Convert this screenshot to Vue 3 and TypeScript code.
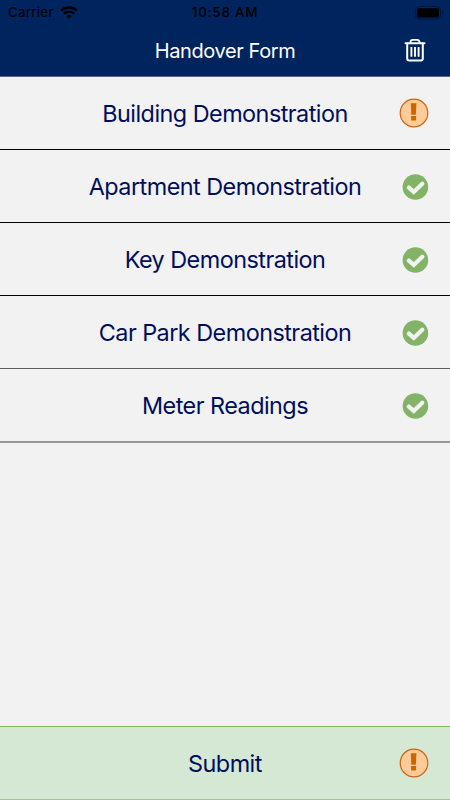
<script setup lang="ts">
type Status = 'done' | 'warning'

interface Section {
  id: string
  title: string
  status: Status
}

const sections: Section[] = [
  { id: 'building', title: 'Building Demonstration', status: 'warning' },
  { id: 'apartment', title: 'Apartment Demonstration', status: 'done' },
  { id: 'key', title: 'Key Demonstration', status: 'done' },
  { id: 'carpark', title: 'Car Park Demonstration', status: 'done' },
  { id: 'meter', title: 'Meter Readings', status: 'done' },
]
</script>

<template>
  <div class="screen">
    <header class="header">
      <div class="status-bar">
        <div class="carrier">
          <span>Carrier</span>
          <svg class="wifi" viewBox="0 0 18 13" width="18" height="13">
            <g fill="none" stroke="#000" stroke-width="2.4">
              <path d="M1 4.6C5.6 0.5 12.4 0.5 17 4.6" />
              <path d="M3.9 7.7C6.9 5.1 11.1 5.1 14.1 7.7" />
            </g>
            <path d="M6.2 10C7.9 8.7 10.1 8.7 11.8 10L9 12.8Z" />
          </svg>
        </div>
        <span class="clock">10:58 AM</span>
        <svg class="battery" viewBox="0 0 29 14" width="29" height="14">
          <rect x="0.5" y="0.5" width="25" height="12.6" rx="3.6" fill="none" stroke="#00153d" />
          <rect x="2" y="2.2" width="22" height="9.2" rx="2" />
          <path d="M27 4.6C28.6 5.2 28.6 8.4 27 9Z" fill="#00153d" />
        </svg>
      </div>
      <div class="nav-bar">
        <h1 class="nav-title">Handover Form</h1>
        <button class="trash" type="button" aria-label="Delete">
          <svg viewBox="0 0 22 24" width="22" height="24">
            <g fill="none" stroke="#fff" stroke-linecap="round" stroke-linejoin="round">
              <path stroke-width="2" d="M1.5 5.3H20.5" />
              <path stroke-width="1.8" d="M6.4 4.8C6.4 2.6 7.2 1.8 9 1.8H13C14.8 1.8 15.6 2.6 15.6 4.8" />
              <path stroke-width="2" d="M3.2 5.5V20.6Q3.2 22.5 5.2 22.5H16.8Q18.8 22.5 18.8 20.6V5.5" />
              <path stroke-width="1.9" stroke-linecap="butt" d="M7.4 9V18.8M11 9V18.8M14.6 9V18.8" />
            </g>
          </svg>
        </button>
      </div>
    </header>

    <main class="list">
      <button v-for="s in sections" :key="s.id" :class="['row', s.id]" type="button">
        <span class="label">{{ s.title }}</span>
        <svg v-if="s.status === 'warning'" class="icon warning" viewBox="0 0 30 30" width="30" height="30">
          <circle cx="15" cy="15" r="13.8" fill="#ffcc99" stroke="#cc6510" stroke-width="1.2" />
          <path d="M11.8 5.2H17.4L16.9 16.8H12.3Z M12.1 18.1H17.1V22.4H12.1Z" fill="#cc6600" />
        </svg>
        <svg v-else class="icon" viewBox="0 0 30 30" width="30" height="30">
          <circle cx="15.4" cy="15" r="12.8" fill="#82b366" />
          <path d="M8.9 15.6L13.8 19.9L22.3 11.7" fill="none" stroke="#f2f2f2" stroke-width="4.2" stroke-linecap="round" stroke-linejoin="miter" />
        </svg>
      </button>
    </main>

    <button class="row submit" type="button">
      <span class="label">Submit</span>
      <svg class="icon warning" viewBox="0 0 30 30" width="30" height="30">
        <circle cx="15" cy="15" r="13.8" fill="#ffcc99" stroke="#cc6510" stroke-width="1.2" />
        <path d="M11.8 5.2H17.4L16.9 16.8H12.3Z M12.1 18.1H17.1V22.4H12.1Z" fill="#cc6600" />
      </svg>
    </button>
  </div>
</template>

<style>
body {
  margin: 0;
}
</style>

<style scoped>
.screen {
  display: flex;
  flex-direction: column;
  box-sizing: border-box;
  width: 100%;
  height: 800px;
  background: #f2f2f2;
  font-family: Inter, "Liberation Sans", sans-serif;
  color: #000f5c;
}

button {
  margin: 0;
  padding: 0;
  border: 0;
  background: none;
  font: inherit;
  color: inherit;
}

svg {
  display: block;
}

.header {
  flex: none;
  box-sizing: border-box;
  height: 77px;
  background: #00245d;
  border-bottom: 1px solid #67648c;
}

.status-bar {
  display: grid;
  grid-template-columns: 1fr auto 1fr;
  align-items: center;
  height: 25px;
  padding: 0 6px 0 8px;
  color: #000;
  font-size: 13.4px;
  line-height: 25px;
}

.carrier {
  display: flex;
  align-items: center;
  gap: 6px;
  letter-spacing: 0.26px;
}

.clock {
  margin-right: 2px;
  font-weight: 500;
  font-size: 13.4px;
  letter-spacing: 0.75px;
}

.battery {
  justify-self: end;
}

.nav-bar {
  display: grid;
  grid-template-columns: 70px 1fr 70px;
  align-items: center;
  height: 50px;
}

.nav-title {
  grid-column: 2;
  margin: 0;
  padding-top: 2px;
  color: #fff;
  font-size: 20px;
  font-weight: 400;
  line-height: 24px;
  letter-spacing: -0.4px;
  text-align: center;
}

.trash {
  justify-self: center;
}

.list {
  flex: 1;
}

.row {
  display: grid;
  grid-template-columns: 70px 1fr 70px;
  align-items: center;
  box-sizing: border-box;
  width: 100%;
  height: 73px;
  border-bottom: 1px solid #000;
}

.row.carpark {
  border-bottom-color: #5e5e5e;
}

.row.meter {
  height: 74px;
  border-bottom: 2px solid #979797;
}

.label {
  grid-column: 2;
  padding-top: 1px;
  font-size: 23.4px;
  font-weight: 400;
  line-height: 30px;
  letter-spacing: -0.53px;
  text-align: center;
  white-space: nowrap;
}

.icon {
  justify-self: center;
  margin-top: 1px;
}

.icon.warning {
  margin-top: 0;
  margin-right: 2px;
}

.row.submit {
  flex: none;
  height: 74px;
  background: #d5e8d4;
  border-top: 1px solid #82b366;
  border-bottom: 1px solid #a1c797;
}
</style>
